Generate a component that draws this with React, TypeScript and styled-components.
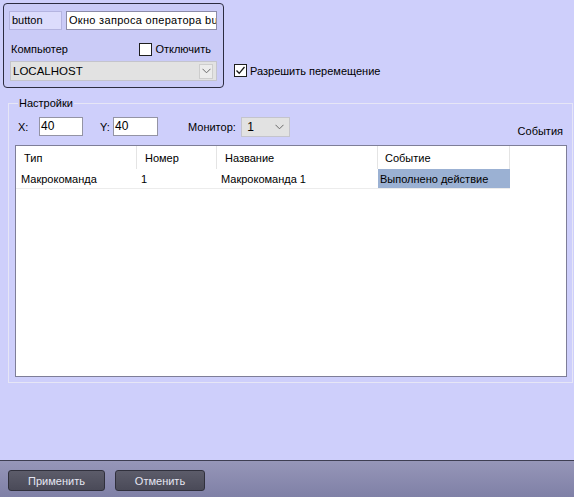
import React from 'react';
import styled, { createGlobalStyle } from 'styled-components';

const Global = createGlobalStyle`
  html, body { margin: 0; padding: 0; }
  body {
    width: 574px; height: 497px; overflow: hidden;
    background: #cecffb;
    font-family: "Liberation Sans", Arial, sans-serif;
    font-size: 11px; color: #000;
  }
  * { box-sizing: border-box; }
`;

const Window = styled.div`
  width: 574px; height: 497px;
  display: flex; flex-direction: column;
  background: #cecffb;
`;

const Main = styled.div`
  flex: 1;
  display: flex; flex-direction: column;
  padding: 3px 3px 0 3px;
`;

const TopRow = styled.div`
  display: flex; align-items: flex-start;
`;

const ObjectBox = styled.div`
  width: 221px; height: 85px;
  border: 1px solid #2c2c40;
  border-radius: 4px;
  background: #cacbf7;
  padding: 7px 5px 0 5px;
  display: flex; flex-direction: column;
`;

const NameRow = styled.div`
  display: flex; gap: 4px;
`;

const TextBox = styled.div<{ $w: number; $tint?: boolean; $wide?: boolean }>`
  width: ${p => p.$w}px; height: 19px;
  background: ${p => (p.$tint ? '#dcdcfc' : '#ffffff')};
  border: 1px solid ${p => (p.$tint ? '#b4b4e0' : '#8c8ca8')};
  padding: 0 2px;
  line-height: 17px;
  letter-spacing: ${p => (p.$wide ? '0.3px' : '0')};
  white-space: nowrap; overflow: hidden;
`;

const ComputerRow = styled.div`
  display: flex; align-items: center;
  height: 14px; margin-top: 12px;
  padding-left: 2px;
`;

const CheckLabel = styled.label<{ $push?: boolean }>`
  display: flex; align-items: center; gap: 3px;
  margin-left: ${p => (p.$push ? 'auto' : '0')};
  margin-right: ${p => (p.$push ? '7px' : '0')};
`;

const Box = styled.span`
  width: 13px; height: 13px;
  background: #fff;
  border: 1px solid #1e1e1e;
  display: flex; align-items: center; justify-content: center;
`;

const Combo = styled.div<{ $w: number; $h: number }>`
  width: ${p => p.$w}px; height: ${p => p.$h}px;
  background: #e2e2e2;
  border: 1px solid #c4c4cc;
  display: flex; align-items: center;
  padding: 0 3px 0 2px;
`;

const ComboText = styled.span<{ $big?: boolean }>`
  flex: 1;
  font-size: ${p => (p.$big ? '12px' : '11.5px')};
`;

const ComboButton = styled.span<{ $framed?: boolean }>`
  width: 14px; height: 15px;
  display: flex; align-items: center; justify-content: center;
  background: ${p => (p.$framed ? '#ececec' : 'transparent')};
  border: 1px solid ${p => (p.$framed ? '#cdcdcd' : 'transparent')};
`;

const HostCombo = styled(Combo)`
  margin-top: 5px; margin-left: 1px;
`;

const PermCheck = styled(CheckLabel)`
  margin-top: 61px; margin-left: 10px;
`;

const Group = styled.fieldset`
  margin: 8px 0 0 5px;
  width: 565px;
  min-width: 0;
  border: 1px solid #e6e6f6;
  padding: 0 5px 5px 6px;
  display: flex; flex-direction: column;
`;

const Legend = styled.legend`
  line-height: 14px;
  margin-left: 3px;
  padding: 0 1px;
`;

const ControlRow = styled.div`
  display: flex; align-items: center;
  height: 21px; margin-top: 6px;
  padding-left: 3px;
`;

const FieldLabel = styled.span<{ $w: number; $ml?: number }>`
  width: ${p => p.$w}px;
  margin-left: ${p => p.$ml ?? 0}px;
  white-space: nowrap;
`;

const NumBox = styled.div<{ $w: number }>`
  width: ${p => p.$w}px; height: 19px;
  background: #fff;
  border: 1px solid #9494a4;
  padding: 0 1px;
  line-height: 17px;
  font-size: 12px;
`;

const EventsLabel = styled.span`
  margin-left: auto; margin-right: 4px;
  align-self: flex-start;
  margin-top: 9px;
  line-height: 13px;
`;

const Table = styled.div`
  margin-top: 8px;
  height: 232px;
  background: #fff;
  border: 1px solid #7e7e98;
  display: grid;
  grid-template-columns: 121px 80px 161px 132px 1fr;
  grid-template-rows: 23px 20px 1fr;
`;

const HeadCell = styled.div<{ $pad: number }>`
  display: flex; align-items: center;
  padding-left: ${p => p.$pad}px;
  border-right: 1px solid #e4e4e4;
`;

const Filler = styled.div``;

const Cell = styled.div<{ $pad: number; $sel?: boolean }>`
  display: flex; align-items: center;
  padding-left: ${p => p.$pad}px;
  border-bottom: 1px solid #ececec;
  background: ${p => (p.$sel ? '#9bb1d3' : 'transparent')};
  white-space: nowrap;
`;

const Footer = styled.div`
  height: 37px;
  border-top: 1px solid #3e3e52;
  background: linear-gradient(#9696b8, #7f80a6);
  display: flex; align-items: flex-start; gap: 10px;
  padding: 9px 0 0 8px;
`;

const Button = styled.button<{ $w: number }>`
  width: ${p => p.$w}px; height: 21px;
  border: 1px solid #30303c;
  border-radius: 3px;
  background: linear-gradient(#5c5c6a, #4a4a58);
  color: #e6e6f2;
  font-family: "Liberation Sans", Arial, sans-serif;
  font-size: 11px;
  padding: 0;
`;

const Chevron = () => (
  <svg width="9" height="6" viewBox="0 0 9 6">
    <polyline points="0.5,0.8 4.5,4.8 8.5,0.8" fill="none" stroke="#6a6a6a" strokeWidth="1" />
  </svg>
);

const Tick = () => (
  <svg width="11" height="11" viewBox="0 0 11 11">
    <polyline points="1.5,5.5 4.2,8.3 9.5,2" fill="none" stroke="#1a1a1a" strokeWidth="1.3" />
  </svg>
);

export default function App() {
  return (
    <>
      <Global />
      <Window>
        <Main>
          <TopRow>
            <ObjectBox>
              <NameRow>
                <TextBox $w={53} $tint>button</TextBox>
                <TextBox $w={151} $wide>Окно запроса оператора button</TextBox>
              </NameRow>
              <ComputerRow>
                <span>Компьютер</span>
                <CheckLabel $push>
                  <Box />
                  <span>Отключить</span>
                </CheckLabel>
              </ComputerRow>
              <HostCombo $w={207} $h={20}>
                <ComboText>LOCALHOST</ComboText>
                <ComboButton $framed><Chevron /></ComboButton>
              </HostCombo>
            </ObjectBox>
            <PermCheck>
              <Box><Tick /></Box>
              <span>Разрешить перемещение</span>
            </PermCheck>
          </TopRow>
          <Group>
            <Legend>Настройки</Legend>
            <ControlRow>
              <FieldLabel $w={21}>X:</FieldLabel>
              <NumBox $w={44}>40</NumBox>
              <FieldLabel $w={13} $ml={17}>Y:</FieldLabel>
              <NumBox $w={45}>40</NumBox>
              <FieldLabel $w={53} $ml={30}>Монитор:</FieldLabel>
              <Combo $w={49} $h={20}>
                <ComboText $big>&nbsp;1</ComboText>
                <ComboButton><Chevron /></ComboButton>
              </Combo>
              <EventsLabel>События</EventsLabel>
            </ControlRow>
            <Table>
              <HeadCell $pad={8}>Тип</HeadCell>
              <HeadCell $pad={8}>Номер</HeadCell>
              <HeadCell $pad={8}>Название</HeadCell>
              <HeadCell $pad={7}>Событие</HeadCell>
              <Filler />
              <Cell $pad={5}>Макрокоманда</Cell>
              <Cell $pad={4}>1</Cell>
              <Cell $pad={4}>Макрокоманда 1</Cell>
              <Cell $pad={2} $sel>Выполнено действие</Cell>
              <Filler />
            </Table>
          </Group>
        </Main>
        <Footer>
          <Button $w={97}>Применить</Button>
          <Button $w={90}>Отменить</Button>
        </Footer>
      </Window>
    </>
  );
}
